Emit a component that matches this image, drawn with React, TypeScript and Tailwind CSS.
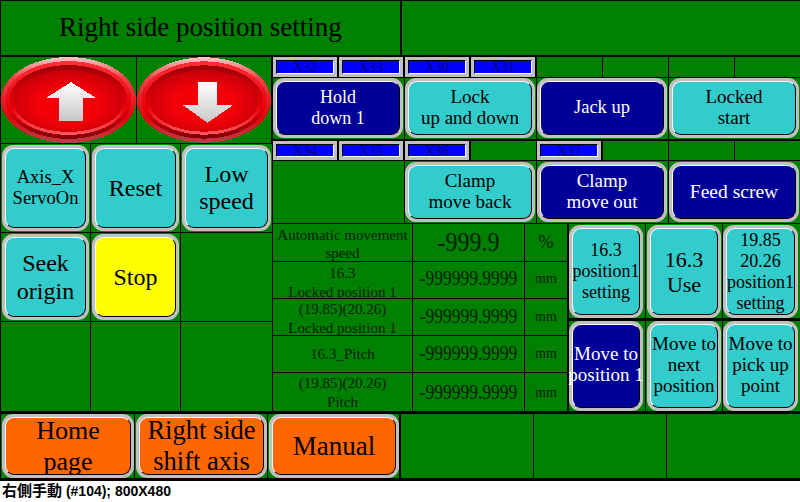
import type { ReactNode } from 'react'

const serif = 'font-["Liberation_Serif",serif]'

type Tone = 'teal' | 'navy' | 'yellow' | 'orange'

const toneClass: Record<Tone, string> = {
  teal: 'bg-[#33cccc] text-black',
  navy: 'bg-[#000099] text-white',
  yellow: 'bg-[#ffff00] text-black',
  orange: 'bg-[#ff6600] text-black',
}

function Btn({ tone = 'teal', size, children }: { tone?: Tone; size: string; children: ReactNode }) {
  return (
    <div className="h-full w-full rounded-[11px] bg-[#c0c0c0] p-[3px]">
      <div className={`flex h-full w-full items-center justify-center rounded-[9px] border border-t-white border-r-black border-b-black border-l-white text-center whitespace-nowrap ${toneClass[tone]} ${size}`}>
        <span>{children}</span>
      </div>
    </div>
  )
}

function Lamp({ label }: { label: string }) {
  return (
    <div className="h-full w-[64px] bg-[#c0c0c0] p-[3px]">
      <div className="flex h-full items-center justify-center border border-t-black border-r-white border-b-white border-l-black bg-[#0000ff] text-[14px] leading-none text-[#000080]">
        <span className="inline-block scale-y-125">{label}</span>
      </div>
    </div>
  )
}

function RedOval({ down }: { down?: boolean }) {
  const id = down ? 'd' : 'u'
  return (
    <svg viewBox="0 0 135 86" className="h-full w-full" shapeRendering="crispEdges">
      <defs>
        <linearGradient id={`a${id}`} x1="0" y1="0" x2="0" y2="1">
          <stop offset="0" stopColor="#ffc8c8" />
          <stop offset="0.25" stopColor="#f04048" />
          <stop offset="0.7" stopColor="#e80010" />
          <stop offset="1" stopColor="#b84048" />
        </linearGradient>
        <linearGradient id={`b${id}`} x1="0" y1="0" x2="0" y2="1">
          <stop offset="0" stopColor="#ff3038" />
          <stop offset="0.6" stopColor="#e80008" />
          <stop offset="1" stopColor="#800008" />
        </linearGradient>
        <linearGradient id={`c${id}`} x1="0" y1="0" x2="0" y2="1">
          <stop offset="0" stopColor="#a00008" />
          <stop offset="0.6" stopColor="#e80008" />
          <stop offset="1" stopColor="#ff5860" />
        </linearGradient>
        <radialGradient id={`r${id}`} cx="50%" cy="55%" r="55%">
          <stop offset="0.5" stopColor="#f40008" />
          <stop offset="1" stopColor="#c80008" />
        </radialGradient>
        <linearGradient id={`g${id}`} x1="0" y1="0" x2="0" y2="1">
          <stop offset="0" stopColor="#ffffff" />
          <stop offset="1" stopColor="#c8c8c8" />
        </linearGradient>
      </defs>
      <ellipse cx="67.5" cy="43" rx="67.5" ry="43" fill={`url(#a${id})`} />
      <ellipse cx="67.5" cy="43" rx="63" ry="39" fill={`url(#b${id})`} />
      <ellipse cx="67.5" cy="43" rx="59" ry="35" fill={`url(#c${id})`} />
      <ellipse cx="67.5" cy="44" rx="55" ry="31" fill={`url(#r${id})`} />
      <polygon
        points={down ? '61,25 81,25 81,48 97,48 71,66 46,48 61,48' : '70,25 95,41 82,41 82,64 58,64 58,41 45,41'}
        fill={`url(#g${id})`}
      />
    </svg>
  )
}

function Row({ cols, h, children }: { cols: string; h: string; children: ReactNode }) {
  return <div className={`grid gap-px ${cols} ${h}`}>{children}</div>
}

function Cell({ children, className = '' }: { children?: ReactNode; className?: string }) {
  return <div className={`min-h-0 min-w-0 bg-[#008000] ${className}`}>{children}</div>
}

const tableRows = [
  { h: 'h-[36px]', pad: 'pt-[5px]', valuePad: 'pb-[3px]', label: ['16.3', 'Locked position 1'], unit: 'mm' },
  { h: 'h-[36px]', pad: 'pt-[4px]', valuePad: 'pb-[2px]', label: ['(19.85)(20.26)', 'Locked position 1'], unit: 'mm' },
  { h: 'h-[36px]', pad: 'pt-px', valuePad: 'pb-[2px]', label: ['16.3_Pitch'], unit: 'mm' },
  { h: 'h-[38px]', pad: 'pt-[2px]', valuePad: 'pb-0', label: ['(19.85)(20.26)', 'Pitch'], unit: 'mm' },
]

export default function App() {
  return (
    <div className={`h-[502px] w-[800px] overflow-hidden bg-white ${serif}`}>
      <div className="flex h-[481px] flex-col bg-black pt-px pl-px">
        {/* title */}
        <div className="grid h-[54px] shrink-0 grid-cols-[399px_399px] gap-[2px]">
          <Cell className="flex items-center pb-[2px] pl-[58px] text-[27px] text-black">Right side position setting</Cell>
          <Cell />
        </div>

        <div className="mt-[2px] flex h-[354px] shrink-0 gap-[2px]">
          {/* left panel */}
          <div className="flex w-[270px] flex-col gap-px">
            <Row cols="grid-cols-[135px_134px] grid-rows-[86px]" h="h-[86px] shrink-0">
              <Cell><RedOval /></Cell>
              <Cell><RedOval down /></Cell>
            </Row>
            <Row cols="grid-cols-[89px_89px_91px]" h="h-[88px] shrink-0">
              <Cell className="p-px"><Btn size="text-[18.5px] leading-[21px]">Axis_X<br />ServoOn</Btn></Cell>
              <Cell className="p-px"><Btn size="text-[24px]">Reset</Btn></Cell>
              <Cell className="p-px"><Btn size="text-[24px] leading-[27px]">Low<br />speed</Btn></Cell>
            </Row>
            <Row cols="grid-cols-[89px_89px_91px]" h="h-[88px] shrink-0">
              <Cell className="p-px"><Btn size="text-[24px] leading-[28px]">Seek<br />origin</Btn></Cell>
              <Cell className="p-px"><Btn tone="yellow" size="text-[24px]">Stop</Btn></Cell>
              <Cell />
            </Row>
            <Row cols="grid-cols-[89px_89px_91px]" h="flex-1">
              <Cell />
              <Cell />
              <Cell />
            </Row>
          </div>

          {/* right panel */}
          <div className="flex w-[527px] flex-col">
            <Row cols="grid-cols-[65px_65px_65px_65px_65px_65px_65px_65px] grid-rows-[20px]" h="h-[20px] shrink-0">
              <Lamp label="X32" />
              <Lamp label="X33" />
              <Lamp label="X30" />
              <Lamp label="X31" />
              <Cell />
              <Cell />
              <Cell />
              <Cell />
            </Row>
            <Row cols="mt-px grid-cols-[131px_131px_131px_131px] grid-rows-[61px]" h="h-[61px] shrink-0">
              <Cell className="pr-px pb-px"><Btn tone="navy" size="text-[18px] leading-[21px]">Hold<br />down 1</Btn></Cell>
              <Cell className="pr-px pb-px"><Btn size="pb-[2px] text-[19px] leading-[21px]">Lock<br />up and down</Btn></Cell>
              <Cell className="pr-px pb-px"><Btn tone="navy" size="text-[18.5px]">Jack up</Btn></Cell>
              <Cell className="pr-px pb-px"><Btn size="pb-[2px] text-[19px] leading-[21px]">Locked<br />start</Btn></Cell>
            </Row>
            <Row cols="mt-[2px] grid-cols-[65px_65px_65px_65px_65px_65px_65px_65px] grid-rows-[19px]" h="h-[19px] shrink-0">
              <Lamp label="X34" />
              <Lamp label="X35" />
              <Lamp label="X36" />
              <Cell />
              <Lamp label="X37" />
              <Cell />
              <Cell />
              <Cell />
            </Row>
            <Row cols="mt-px grid-cols-[131px_131px_131px_131px] grid-rows-[62px]" h="h-[62px] shrink-0">
              <Cell />
              <Cell className="py-px pr-px"><Btn size="pb-[2px] text-[19px] leading-[21px]">Clamp<br />move back</Btn></Cell>
              <Cell className="py-px pr-px"><Btn tone="navy" size="pb-[2px] text-[19px] leading-[21px]">Clamp<br />move out</Btn></Cell>
              <Cell className="py-px pr-px"><Btn tone="navy" size="text-[19.5px]">Feed screw</Btn></Cell>
            </Row>

            <div className="mt-px flex h-[187px] shrink-0 gap-[2px]">
              {/* readings */}
              <div className="flex w-[294px] flex-col gap-px text-[#002000]">
                <div className="grid h-[37px] shrink-0 grid-cols-[139px_111px_42px] grid-rows-[37px] gap-px">
                  <Cell className="flex items-center justify-center pt-[3px] text-center text-[15px] leading-[18px]"><span>Automatic movement<br />speed</span></Cell>
                  <Cell className="flex items-center justify-center pb-[2px] text-[24px]"><span className="inline-block scale-y-110">-999.9</span></Cell>
                  <Cell className="flex items-center justify-center text-[18px]">%</Cell>
                </div>
                {tableRows.map((row, i) => (
                  <div key={i} className={`flex shrink-0 gap-px ${row.h}`}>
                    <Cell className={`flex w-[139px] items-center justify-center text-center text-[15px] leading-[19px] ${row.pad}`}>
                      <span>{row.label.map((line) => <span key={line} className="block">{line}</span>)}</span>
                    </Cell>
                    <Cell className={`flex w-[111px] items-center justify-center text-[17.5px] ${row.valuePad}`}><span className="inline-block scale-y-[1.2]">-999999.9999</span></Cell>
                    <Cell className={`flex w-[42px] items-center justify-center text-[14px] ${row.valuePad}`}>{row.unit}</Cell>
                  </div>
                ))}
              </div>
              {/* position buttons */}
              <div className="flex flex-1 flex-col gap-[3px]">
                <Row cols="grid-cols-[76px_76px_77px] grid-rows-[94px]" h="h-[94px] shrink-0">
                  <Cell className="pt-px pr-[2px]"><Btn size="text-[18px] leading-[21px]">16.3<br />position1<br />setting</Btn></Cell>
                  <Cell className="px-px pt-px"><Btn size="text-[22px] leading-[25px]">16.3<br />Use</Btn></Cell>
                  <Cell className="pt-px pr-[2px]"><Btn size="text-[18px] leading-[21px]">19.85<br />20.26<br />position1<br />setting</Btn></Cell>
                </Row>
                <Row cols="grid-cols-[76px_76px_77px] grid-rows-[90px]" h="h-[90px] shrink-0">
                  <Cell className="pr-[2px]"><Btn tone="navy" size="pb-[4px] text-[19px] leading-[21px]">Move to<br />position 1</Btn></Cell>
                  <Cell className="px-px"><Btn size="pb-[4px] text-[19px] leading-[21px]">Move to<br />next<br />position</Btn></Cell>
                  <Cell className="pr-[2px]"><Btn size="pb-[4px] text-[19px] leading-[21px]">Move to<br />pick up<br />point</Btn></Cell>
                </Row>
              </div>
            </div>
          </div>
        </div>

        {/* bottom bar */}
        <div className="mt-[3px] flex h-[64px] shrink-0 gap-[2px]">
          <Row cols="grid-cols-[133px_132px_131px] grid-rows-[64px]" h="w-[398px]">
            <Cell className="pl-px"><Btn tone="orange" size="text-[26px] leading-[31px]">Home<br />page</Btn></Cell>
            <Cell className="pl-px"><Btn tone="orange" size="text-[26.5px] leading-[31px]">Right side<br />shift axis</Btn></Cell>
            <Cell className="pl-px"><Btn tone="orange" size="text-[27px]">Manual</Btn></Cell>
          </Row>
          <Row cols="grid-cols-[132px_132px_133px] grid-rows-[64px]" h="flex-1">
            <Cell />
            <Cell />
            <Cell />
          </Row>
        </div>
      </div>
      <div className='h-[21px] pl-[2px] font-["Liberation_Sans","Noto_Sans_CJK_TC",sans-serif] text-[14px] leading-[20px] font-bold text-black'>
        <span className="text-[15px]">右側手動</span> (#104); 800X480
      </div>
    </div>
  )
}
